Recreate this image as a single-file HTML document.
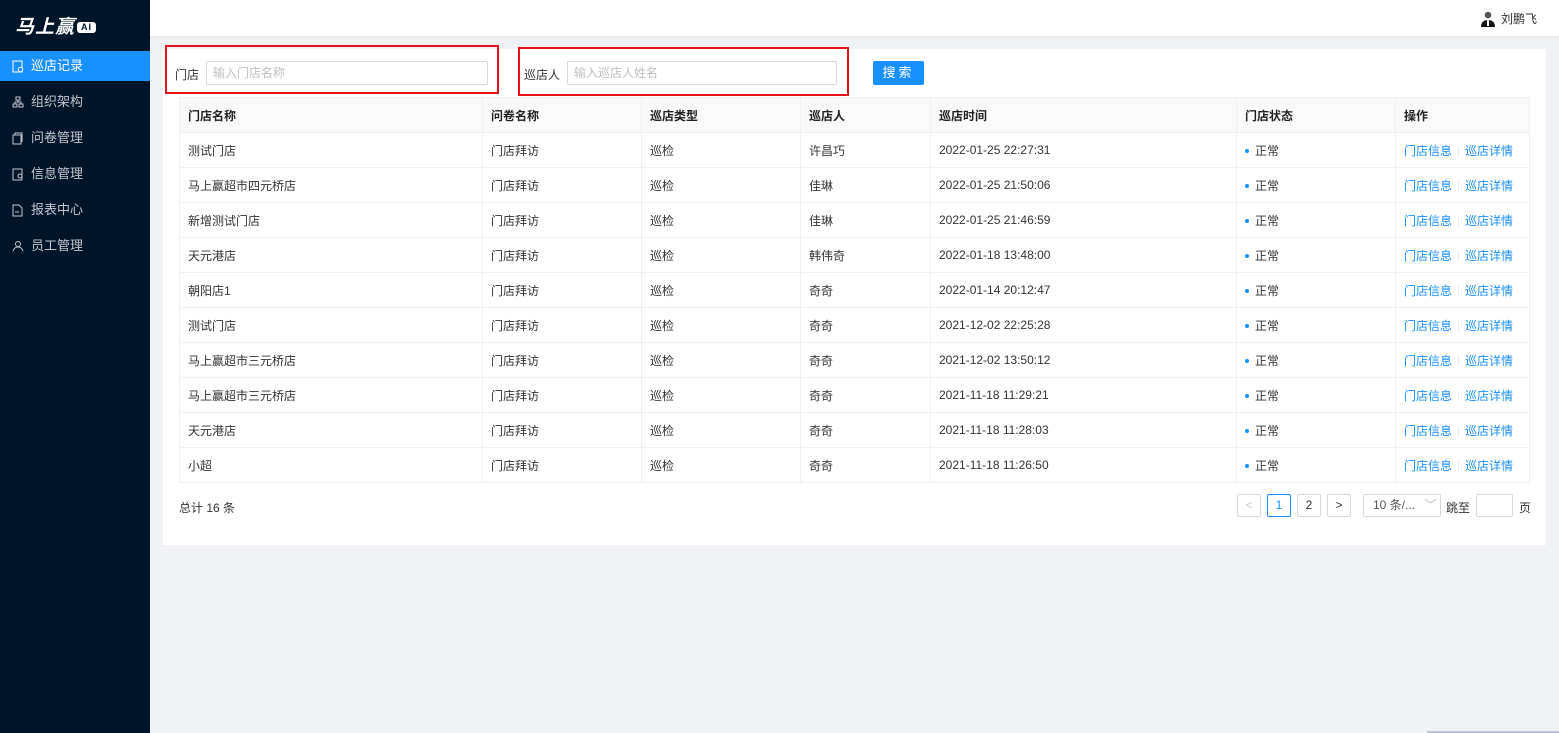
<!DOCTYPE html>
<html><head><meta charset="utf-8"><style>
*{box-sizing:border-box;margin:0;padding:0}
body{width:1559px;height:733px;overflow:hidden;background:#f0f2f5;font-family:"Liberation Sans","Noto Sans CJK SC",sans-serif;font-size:12px;color:#333;position:relative}
.side{position:absolute;left:0;top:0;width:150px;height:733px;background:#001529}
.logo{position:absolute;left:15px;top:12px;color:#fff;font-size:19px;font-weight:bold;font-style:italic;letter-spacing:1px}
.logo span{display:inline-block;background:#fff;color:#001529;font-size:9px;font-style:normal;border-radius:3px;padding:0 4px;line-height:11px;vertical-align:3px;margin-left:2px}
.menu{position:absolute;left:0;width:150px;height:30px;line-height:30px;color:#c0c6cf;font-size:13px;padding-left:31px}
.menu.on{background:#1890ff;color:#fff}
.menu svg{position:absolute;left:12px;top:9px}
.head{position:absolute;left:150px;top:0;right:0;height:36px;background:#fff;box-shadow:0 1px 3px rgba(0,0,0,.06)}
.user{position:absolute;right:22px;top:10px;font-size:12px;color:#333}
.card{position:absolute;left:163px;top:49px;width:1383px;height:496px;background:#fff}
.red{position:absolute;border:2px solid #e8101a}
.lbl{position:absolute;font-size:12px;color:#333}
.inp{position:absolute;height:24px;border:1px solid #d9d9d9;border-radius:2px;color:#bfbfbf;padding-left:6px;line-height:22px}
.btn{position:absolute;left:873px;top:61px;width:51px;height:24px;background:#1890ff;color:#fff;border-radius:2px;text-align:center;line-height:24px;font-size:13px;letter-spacing:3px}
table{position:absolute;left:179px;top:97px;border-collapse:collapse;width:1351px}
td,th{border:1px solid #f0f0f0;height:35px;padding-left:8px;text-align:left;font-weight:normal;white-space:nowrap}
th{background:#fafafa;color:#222;font-weight:bold;font-size:12px}
td{color:#333}
.dot{display:inline-block;width:4px;height:4px;border-radius:50%;background:#1890ff;vertical-align:middle;margin-right:6px}
a{color:#1890ff;text-decoration:none}
.sep{display:inline-block;width:1px;height:10px;background:#e8e8e8;margin:0 6px;vertical-align:middle}
.pg{position:absolute;top:494px;height:23px;border:1px solid #d9d9d9;border-radius:2px;text-align:center;line-height:21px;color:#333;background:#fff}
</style></head><body>
<div class="side">
<div class="logo">马上赢<span>AI</span></div>
<div class="menu on" style="top:51px"><svg width="12" height="13" viewBox="0 0 12 13" fill="none" stroke="#fff"><rect x="1" y="1" width="9" height="11"/><circle cx="8.5" cy="9.5" r="2.2" fill="#1890ff"/></svg>巡店记录</div>
<div class="menu" style="top:87px"><svg width="12" height="12" viewBox="0 0 12 12" fill="none" stroke="#c0c6cf"><rect x="4" y="1" width="4" height="3"/><rect x="1" y="8" width="4" height="3"/><rect x="7" y="8" width="4" height="3"/><path d="M6 4v2M3 8V6h6v2"/></svg>组织架构</div>
<div class="menu" style="top:123px"><svg width="12" height="13" viewBox="0 0 12 13" fill="none" stroke="#c0c6cf"><rect x="1" y="3" width="8" height="9"/><path d="M3 3V1h7v9"/></svg>问卷管理</div>
<div class="menu" style="top:159px"><svg width="12" height="13" viewBox="0 0 12 13" fill="none" stroke="#c0c6cf"><rect x="1" y="1" width="9" height="11"/><circle cx="8" cy="8" r="2"/></svg>信息管理</div>
<div class="menu" style="top:195px"><svg width="12" height="13" viewBox="0 0 12 13" fill="none" stroke="#c0c6cf"><path d="M1 1h6l3 3v8H1z"/><path d="M3 8h4"/></svg>报表中心</div>
<div class="menu" style="top:231px"><svg width="12" height="12" viewBox="0 0 12 12" fill="none" stroke="#c0c6cf"><circle cx="6" cy="4" r="2.5"/><path d="M1 11c1-3 3-4 5-4s4 1 5 4"/></svg>员工管理</div>
</div>
<div class="head"><div class="user"><svg width="14" height="16" viewBox="0 0 14 16" style="vertical-align:-4px;margin-right:6px"><circle cx="7" cy="4" r="3.3" fill="#555"/><path d="M0 16c0-5 3-7 7-7s7 2 7 7z" fill="#111"/><path d="M6 9h2v6H6z" fill="#fff"/></svg>刘鹏飞</div></div>
<div class="card"></div>
<div class="red" style="left:165px;top:45px;width:334px;height:49px"></div>
<div class="red" style="left:518px;top:47px;width:331px;height:49px"></div>
<div class="lbl" style="left:175px;top:66px">门店</div>
<div class="inp" style="left:206px;top:61px;width:282px">输入门店名称</div>
<div class="lbl" style="left:524px;top:66px">巡店人</div>
<div class="inp" style="left:567px;top:61px;width:270px">输入巡店人姓名</div>
<div class="btn">搜索</div>
<table>
<tr><th style="width:303px">门店名称</th><th style="width:159px">问卷名称</th><th style="width:159px">巡店类型</th><th style="width:130px">巡店人</th><th style="width:306px">巡店时间</th><th style="width:159px">门店状态</th><th>操作</th></tr>
<tr><td>测试门店</td><td>门店拜访</td><td>巡检</td><td>许昌巧</td><td>2022-01-25 22:27:31</td><td><i class="dot"></i>正常</td><td><a>门店信息</a><i class="sep"></i><a>巡店详情</a></td></tr>
<tr><td>马上赢超市四元桥店</td><td>门店拜访</td><td>巡检</td><td>佳琳</td><td>2022-01-25 21:50:06</td><td><i class="dot"></i>正常</td><td><a>门店信息</a><i class="sep"></i><a>巡店详情</a></td></tr>
<tr><td>新增测试门店</td><td>门店拜访</td><td>巡检</td><td>佳琳</td><td>2022-01-25 21:46:59</td><td><i class="dot"></i>正常</td><td><a>门店信息</a><i class="sep"></i><a>巡店详情</a></td></tr>
<tr><td>天元港店</td><td>门店拜访</td><td>巡检</td><td>韩伟奇</td><td>2022-01-18 13:48:00</td><td><i class="dot"></i>正常</td><td><a>门店信息</a><i class="sep"></i><a>巡店详情</a></td></tr>
<tr><td>朝阳店1</td><td>门店拜访</td><td>巡检</td><td>奇奇</td><td>2022-01-14 20:12:47</td><td><i class="dot"></i>正常</td><td><a>门店信息</a><i class="sep"></i><a>巡店详情</a></td></tr>
<tr><td>测试门店</td><td>门店拜访</td><td>巡检</td><td>奇奇</td><td>2021-12-02 22:25:28</td><td><i class="dot"></i>正常</td><td><a>门店信息</a><i class="sep"></i><a>巡店详情</a></td></tr>
<tr><td>马上赢超市三元桥店</td><td>门店拜访</td><td>巡检</td><td>奇奇</td><td>2021-12-02 13:50:12</td><td><i class="dot"></i>正常</td><td><a>门店信息</a><i class="sep"></i><a>巡店详情</a></td></tr>
<tr><td>马上赢超市三元桥店</td><td>门店拜访</td><td>巡检</td><td>奇奇</td><td>2021-11-18 11:29:21</td><td><i class="dot"></i>正常</td><td><a>门店信息</a><i class="sep"></i><a>巡店详情</a></td></tr>
<tr><td>天元港店</td><td>门店拜访</td><td>巡检</td><td>奇奇</td><td>2021-11-18 11:28:03</td><td><i class="dot"></i>正常</td><td><a>门店信息</a><i class="sep"></i><a>巡店详情</a></td></tr>
<tr><td>小超</td><td>门店拜访</td><td>巡检</td><td>奇奇</td><td>2021-11-18 11:26:50</td><td><i class="dot"></i>正常</td><td><a>门店信息</a><i class="sep"></i><a>巡店详情</a></td></tr>
</table>
<div class="lbl" style="left:179px;top:499px">总计 16 条</div>
<div class="pg" style="left:1237px;width:24px;color:#ccc">&lt;</div>
<div class="pg" style="left:1267px;width:24px;border-color:#1890ff;color:#1890ff">1</div>
<div class="pg" style="left:1297px;width:24px">2</div>
<div class="pg" style="left:1327px;width:24px">&gt;</div>
<div class="pg" style="left:1363px;width:78px;text-align:left;padding-left:9px;color:#555">10 条/... <span style="color:#bbb;margin-left:6px">﹀</span></div>
<div class="lbl" style="left:1446px;top:499px">跳至</div>
<div class="pg" style="left:1476px;width:37px"></div>
<div class="lbl" style="left:1519px;top:499px">页</div>
<div style="position:absolute;left:1427px;top:731px;width:132px;height:2px;background:#b8c4d8"></div>
</body></html>
